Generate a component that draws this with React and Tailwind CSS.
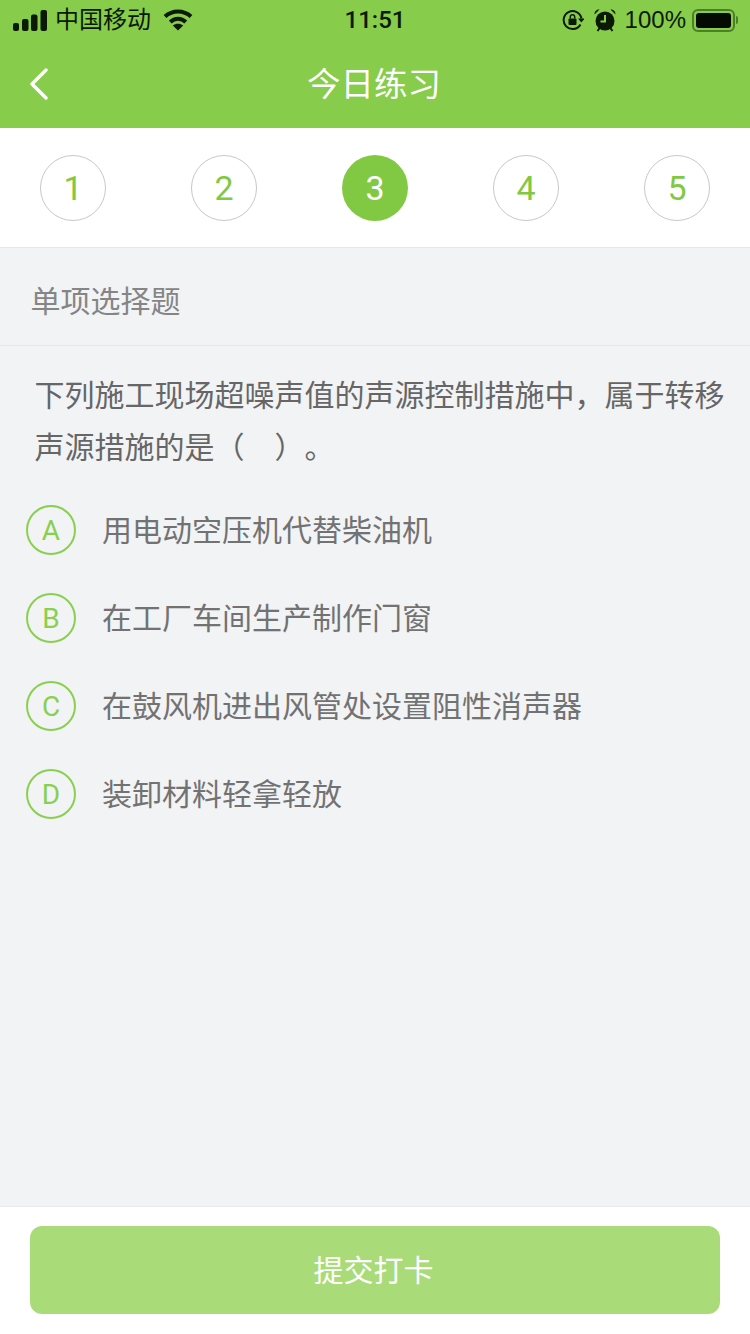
import React from 'react';

const FONT = 'font-["Liberation_Sans","Noto_Sans_CJK_SC",sans-serif]';

const steps = [1, 2, 3, 4, 5];

const options = [
  { key: 'A', text: '用电动空压机代替柴油机' },
  { key: 'B', text: '在工厂车间生产制作门窗' },
  { key: 'C', text: '在鼓风机进出风管处设置阻性消声器' },
  { key: 'D', text: '装卸材料轻拿轻放' },
];

const StatusBar = () => (
  <div className="h-10 flex items-center justify-between text-[#0b1a05]">
    <div className="w-[260px] flex items-center pl-[13px]">
      <svg width="34" height="21" viewBox="0 0 34 21" fill="currentColor">
        <rect x="0" y="13" width="6" height="8" rx="2" />
        <rect x="9" y="9" width="6.5" height="12" rx="2" />
        <rect x="18" y="4.5" width="6.5" height="16.5" rx="2" />
        <rect x="27.5" y="0" width="6.5" height="21" rx="2" />
      </svg>
      <span className="ml-[8px] text-[24px] leading-none">中国移动</span>
      <svg className="ml-[12px]" width="30" height="22" viewBox="0 0 30 22" fill="none" stroke="currentColor" strokeWidth="4">
        <path d="M2 7.5C9.5 .8 20.5 .8 28 7.5" />
        <path d="M7.2 13C11.8 8.6 18.2 8.6 22.8 13" />
        <path d="M15 21.5L9.8 16.5C13 14 17 14 20.2 16.5Z" fill="currentColor" stroke="none" />
      </svg>
    </div>
    <span className="text-[24px] font-['Roboto'] font-medium leading-none">11:51</span>
    <div className="w-[260px] flex items-center justify-end pr-[12px]">
      <svg width="22" height="22" viewBox="0 0 22 22" fill="none" stroke="currentColor" strokeWidth="2">
        <path d="M18.5 15.5A9 9 0 1 1 19.5 9.5" />
        <path d="M16 9.5h6.5l-3.2 4z" fill="currentColor" stroke="none" />
        <rect x="6.5" y="9.5" width="8" height="6.5" rx="1" fill="currentColor" stroke="none" />
        <path d="M8.3 9.5V8a2.2 2.2 0 0 1 4.4 0v1.5" strokeWidth="1.5" />
      </svg>
      <svg className="ml-[10px]" width="22" height="24" viewBox="0 0 22 24" fill="currentColor">
        <circle cx="11" cy="13" r="9.5" />
        <path d="M0.5 6.5L5.5 1.5C3 .8 .2 3.5 .5 6.5ZM21.5 6.5L16.5 1.5C19 .8 21.8 3.5 21.5 6.5Z" />
        <path d="M3.5 23l2.5-3.5M18.5 23L16 19.5" stroke="currentColor" strokeWidth="2" />
        <path d="M11 7v6.5H6.5" fill="none" stroke="#87cc4a" strokeWidth="2" />
      </svg>
      <span className="ml-[9px] text-[24px] leading-none">100%</span>
      <div className="ml-[6px] flex items-center">
        <div className="w-[43px] h-[23px] rounded-[6px] border-2 border-[#4d7f2a] p-[2px]">
          <div className="w-full h-full rounded-[3px] bg-[#050a02]" />
        </div>
        <div className="ml-[1px] w-[2px] h-[8px] rounded-r bg-[#4d7f2a]" />
      </div>
    </div>
  </div>
);

export default function App() {
  return (
    <div className={`w-[750px] h-[1334px] flex flex-col bg-[#f2f3f5] ${FONT}`}>
      {/* Header */}
      <div className="bg-[#87cc4a]">
        <StatusBar />
        <div className="h-[88px] flex items-center justify-center relative">
          <svg className="absolute left-[29px] top-[28px]" width="20" height="32" viewBox="0 0 20 32" fill="none" stroke="#fff" strokeWidth="3.4" strokeLinecap="round" strokeLinejoin="round">
            <path d="M17 2L3 16l14 14" />
          </svg>
          <span className="text-[33.5px] text-white leading-none pt-[2px] pr-[2px]">今日练习</span>
        </div>
      </div>

      {/* Steps */}
      <div className="h-[120px] bg-white border-b border-[#e6e6e6] px-10 flex items-center justify-between pt-[1px] font-['Roboto']">
        {steps.map((n) => (
          <div
            key={n}
            className={
              n === 3
                ? 'w-[66px] h-[66px] rounded-full bg-[#82c943] text-white text-[34px] flex items-center justify-center'
                : 'w-[66px] h-[66px] rounded-full border border-[#c8c8c8] text-[#82c943] text-[34px] flex items-center justify-center'
            }
          >
            {n}
          </div>
        ))}
      </div>

      {/* Question type */}
      <div className="h-[98px] border-b border-[#e6e7ea] pl-[30.5px] pt-[10px] flex items-center text-[30px] text-[#858585]">
        单项选择题
      </div>

      {/* Question */}
      <div className="flex-1">
        <p className="pt-[24px] pl-[34.5px] pr-[24px] text-[30px] leading-[52px] text-[#666] [text-spacing-trim:space-all]">
          下列施工现场超噪声值的声源控制措施中，属于转移声源措施的是（　）。
        </p>
        <div className="mt-[12px] pl-[26px] flex flex-col">
          {options.map((o) => (
            <div key={o.key} className="h-[88px] flex items-center">
              <div className="w-[50px] h-[50px] rounded-full border-2 border-[#8ad04f] text-[#8ad04f] text-[28px] font-['Roboto'] pt-[2px] flex items-center justify-center">
                {o.key}
              </div>
              <span className="ml-[26px] text-[30px] text-[#727272]">{o.text}</span>
            </div>
          ))}
        </div>
      </div>

      {/* Submit */}
      <div className="h-[128px] bg-white border-t border-[#e9eaec] px-[30px] pt-[19px]">
        <button className="w-full h-[88px] rounded-[12px] bg-[#a9dc79] text-white text-[30px] pr-[3px]">
          提交打卡
        </button>
      </div>
    </div>
  );
}
